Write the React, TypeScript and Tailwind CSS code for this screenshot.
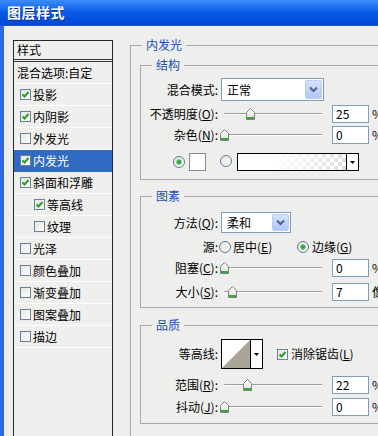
import React from 'react';

const Check = ({ on }: { on: boolean }) => (
  <span className="inline-flex w-[11px] h-[11px] shrink-0 items-center justify-center border border-[#6b7f99] bg-gradient-to-br from-[#e4e4e0] to-white">
    {on && (
      <svg width="9" height="9" viewBox="0 0 9 9">
        <path d="M1.5 4.5 L3.5 6.5 L7.5 2" fill="none" stroke="#21a121" strokeWidth="2" />
      </svg>
    )}
  </span>
);

const Radio = ({ on }: { on: boolean }) => (
  <span className="inline-flex w-[12px] h-[12px] shrink-0 items-center justify-center rounded-full border border-[#5e7898] bg-gradient-to-br from-[#e2e2dc] to-white">
    {on && <span className="w-[4px] h-[4px] rounded-full bg-[#2fa52f] ring-1 ring-[#8fd18f]" />}
  </span>
);

const Thumb = () => (
  <svg width="9" height="12" viewBox="0 0 9 12">
    <defs>
      <linearGradient id="tg" x1="0" y1="0" x2="0" y2="1">
        <stop offset="0" stopColor="#ffffff" />
        <stop offset="1" stopColor="#dcdcd6" />
      </linearGradient>
    </defs>
    <polygon points="0.5,4.5 4.5,0.5 8.5,4.5 8.5,11.5 0.5,11.5" fill="url(#tg)" stroke="#7c8288" />
    <rect x="1" y="9" width="7" height="2" fill="#35a835" />
  </svg>
);

const Slider = ({ pos }: { pos: number }) => (
  <div className="relative w-[103px] h-full flex items-center pl-[3px] pr-[2px]">
    <div className="w-full h-[2px] rounded-l-full border-t border-[#9c9c9c] bg-white" />
    <div className="absolute top-[4px]" style={{ left: 3 + pos - 4 }}>
      <Thumb />
    </div>
  </div>
);

const Field = ({ value, unit = '%' }: { value: string; unit?: string }) => (
  <>
    <div className="ml-[8px] w-[37px] h-[18px] border border-[#7f9db9] bg-white pl-[3px] leading-[16px] shrink-0">{value}</div>
    <span className="ml-[3px] shrink-0">{unit}</span>
  </>
);

const Label = ({ children }: { children: React.ReactNode }) => (
  <div className="w-[78px] shrink-0 text-right pr-[1px] whitespace-nowrap">{children}</div>
);

const Combo = ({ value, w, h }: { value: string; w: string; h: string }) => (
  <div className={`ml-[2px] ${w} ${h} shrink-0 flex items-stretch border border-[#7f9db9] bg-white`}>
    <div className="flex-1 flex items-center pl-[5px]">{value}</div>
    <div className="w-[17px] m-[1px] flex items-center justify-center rounded-[2px] border border-[#bccdf4] bg-gradient-to-b from-[#d5e1fd] to-[#b2c7f7]">
      <svg width="9" height="7" viewBox="0 0 9 7">
        <path d="M1 1.5 L4.5 5 L8 1.5" fill="none" stroke="#4d6185" strokeWidth="2" />
      </svg>
    </div>
  </div>
);

const SliderRow = ({ label, pos, value, unit, className }: { label: React.ReactNode; pos: number; value: string; unit?: string; className: string }) => (
  <div className={`flex items-center h-[20px] ${className}`}>
    <Label>{label}</Label>
    <div className="ml-[2px] h-full">
      <Slider pos={pos} />
    </div>
    <Field value={value} unit={unit} />
  </div>
);

const Group = ({ title, className, children }: { title: string; className: string; children: React.ReactNode }) => (
  <fieldset className={`border border-[#a9a9a9] ${className}`}>
    <legend className="ml-[11px] px-[4px] leading-[14px] text-[#1750b5]">{title}</legend>
    {children}
  </fieldset>
);

const styles: { name: string; on: boolean; indent?: boolean; sel?: boolean }[] = [
  { name: '投影', on: true },
  { name: '内阴影', on: true },
  { name: '外发光', on: false },
  { name: '内发光', on: true, sel: true },
  { name: '斜面和浮雕', on: true },
  { name: '等高线', on: true, indent: true },
  { name: '纹理', on: false, indent: true },
  { name: '光泽', on: false },
  { name: '颜色叠加', on: false },
  { name: '渐变叠加', on: false },
  { name: '图案叠加', on: false },
  { name: '描边', on: false },
];

export default function App() {
  return (
    <div className="w-[378px] h-[436px] overflow-hidden flex flex-col bg-[#eeeeec] text-[12px] text-black [font-family:'Noto_Sans_CJK_SC','Noto_Sans',sans-serif]">
      {/* title bar */}
      <div className="h-[26px] shrink-0 flex items-center pl-[7px] bg-gradient-to-b from-[#3b8bf8] via-[#0a5ae9] to-[#0148d4] border-b border-[#1a54c8]">
        <span className="text-white font-bold text-[14px] tracking-[0.5px] [text-shadow:1px_1px_0_#0b2f8a]">图层样式</span>
      </div>

      <div className="flex flex-1 min-h-0">
        <div className="w-[4px] shrink-0 bg-[#2f68df]" />

        {/* style list */}
        <div className="pl-[9px] pt-[14px] shrink-0">
          <div className="w-[100px] h-[420px] border border-[#262626] bg-[#efefed]">
            <div className="h-[21px] flex items-center pl-[3px] border-b-[3px] border-double border-[#3a3a3a]">样式</div>
            <div className="h-[22px] flex items-center pl-[3px] border-b border-white">混合选项:自定</div>
            {styles.map((s) => (
              <div
                key={s.name}
                className={`h-[22px] flex items-center gap-[2px] border-b ${s.indent ? 'pl-[20px]' : 'pl-[6px]'} ${
                  s.sel ? 'bg-[#316ac5] text-white border-[#316ac5]' : 'border-white'
                }`}
              >
                <Check on={s.on} />
                <span>{s.name}</span>
              </div>
            ))}
          </div>
        </div>

        {/* settings */}
        <div className="ml-[17px] pt-[12px] shrink-0">
          <Group title="内发光" className="w-[262px]">
            <div className="pl-[9px] pb-[20px]">
              <Group title="结构" className="mt-[6px] w-[244px]">
                <div className="pb-[8px]">
                  <div className="mt-[6px] flex items-center h-[23px]">
                    <Label>混合模式:</Label>
                    <Combo value="正常" w="w-[103px]" h="h-[23px]" />
                  </div>
                  <SliderRow className="mt-[3px]" label={<>不透明度(<u>O</u>):</>} pos={26} value="25" />
                  <SliderRow className="mt-[1px]" label={<>杂色(<u>N</u>):</>} pos={0} value="0" />
                  <div className="mt-[8px] h-[18px] flex items-center pl-[32px]">
                    <Radio on={true} />
                    <div className="ml-[4px] w-[17px] h-[18px] border border-[#8a8a8a] bg-white" />
                    <div className="ml-[14px]">
                      <Radio on={false} />
                    </div>
                    <div className="ml-[5px] w-[122px] h-[18px] flex border border-black [background-image:repeating-conic-gradient(#dedede_0_25%,#ffffff_0_50%)] [background-size:8px_8px]">
                      <div className="flex-1 bg-gradient-to-r from-white from-30% to-transparent" />
                      <div className="w-[12px] border-l border-black bg-white flex items-center justify-center">
                        <svg width="5" height="3" viewBox="0 0 5 3">
                          <path d="M0 0 H5 L2.5 3 Z" fill="#000" />
                        </svg>
                      </div>
                    </div>
                  </div>
                </div>
              </Group>

              <Group title="图素" className="mt-[9px] w-[244px]">
                <div className="pb-[5px]">
                  <div className="mt-[9px] flex items-center h-[21px]">
                    <Label>方法(<u>Q</u>):</Label>
                    <Combo value="柔和" w="w-[70px]" h="h-[21px]" />
                  </div>
                  <div className="mt-[4px] flex items-center h-[20px]">
                    <Label>源:</Label>
                    <div className="flex items-center w-[78px]">
                      <Radio on={false} />
                      <span className="ml-[2px]">居中(<u>E</u>)</span>
                    </div>
                    <div className="flex items-center">
                      <Radio on={true} />
                      <span className="ml-[3px]">边缘(<u>G</u>)</span>
                    </div>
                  </div>
                  <SliderRow className="mt-[1px]" label={<>阻塞(<u>C</u>):</>} pos={0} value="0" />
                  <SliderRow className="mt-[4px]" label={<>大小(<u>S</u>):</>} pos={8} value="7" unit="像素" />
                </div>
              </Group>

              <Group title="品质" className="mt-[10px] w-[244px]">
                <div className="pb-[6px]">
                  <div className="mt-[7px] flex items-center h-[30px]">
                    <Label>等高线:</Label>
                    <div className="ml-[2px] w-[42px] h-[30px] flex border border-black bg-white shrink-0">
                      <svg className="flex-1" width="29" height="28" viewBox="0 0 29 28" preserveAspectRatio="none">
                        <polygon points="0,28 29,0 29,28" fill="#aba597" />
                      </svg>
                      <div className="w-[12px] border-l border-black flex items-center justify-center">
                        <svg width="5" height="3" viewBox="0 0 5 3">
                          <path d="M0 0 H5 L2.5 3 Z" fill="#000" />
                        </svg>
                      </div>
                    </div>
                    <div className="ml-[14px] flex items-center gap-[3px]">
                      <Check on={true} />
                      <span>消除锯齿(<u>L</u>)</span>
                    </div>
                  </div>
                  <SliderRow className="mt-[6px]" label={<>范围(<u>R</u>):</>} pos={23} value="22" />
                  <SliderRow className="mt-[2px]" label={<>抖动(<u>J</u>):</>} pos={0} value="0" />
                </div>
              </Group>
            </div>
          </Group>
        </div>
      </div>
    </div>
  );
}
